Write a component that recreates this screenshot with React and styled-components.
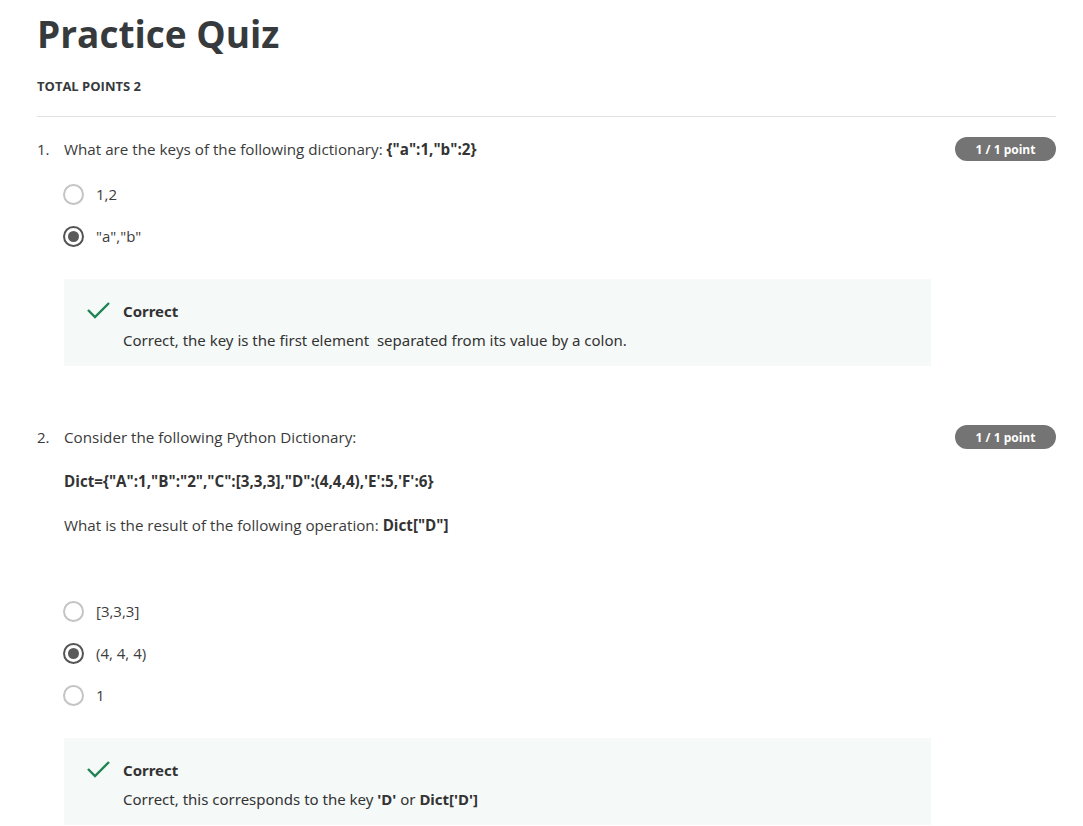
import React from 'react';
import styled, { createGlobalStyle } from 'styled-components';

const GlobalStyle = createGlobalStyle`
  body {
    margin: 0;
    background: #ffffff;
    font-family: 'Open Sans', 'Noto Sans', sans-serif;
    color: #373a3c;
  }
`;

const Page = styled.div`
  padding: 12px 27px 0 37px;
`;

const Title = styled.h1`
  margin: 0;
  font-size: 37px;
  line-height: 43px;
  font-weight: 700;
  color: #373a3c;
`;

const TotalPoints = styled.div`
  margin-top: 21px;
  font-size: 13px;
  line-height: 20px;
  font-weight: 700;
  text-transform: uppercase;
  color: #373a3c;
`;

const Divider = styled.hr`
  margin: 20px 0 0 0;
  border: none;
  border-top: 1px solid #e1e1e1;
`;

const QuestionBlock = styled.section`
  margin-top: ${(p) => p.$top}px;
`;

const QuestionRow = styled.div`
  display: flex;
  align-items: flex-start;
  justify-content: space-between;
`;

const QuestionBody = styled.div`
  display: flex;
  flex: 1;
`;

const Number = styled.span`
  width: 27px;
  flex-shrink: 0;
  font-size: 15px;
  line-height: 24px;
`;

const Prompt = styled.div`
  display: flex;
  flex-direction: column;
  gap: 20px;
  font-size: 15.2px;
  line-height: 24px;
  color: #3a3a3a;

  p {
    margin: 0;
  }
  b {
    font-weight: 700;
    color: #333;
  }
`;

const PointBadge = styled.span`
  width: 101px;
  height: 24px;
  border-radius: 12px;
  background: #747474;
  color: #ffffff;
  font-size: 12px;
  font-weight: 700;
  display: flex;
  align-items: center;
  justify-content: center;
  flex-shrink: 0;
`;

const Options = styled.div`
  margin: ${(p) => p.$top}px 0 0 26px;
  display: flex;
  flex-direction: column;
`;

const Option = styled.label`
  height: 42px;
  display: flex;
  align-items: center;
  gap: 12px;
  font-size: 15px;
  color: #3c3c3c;
`;

const Radio = styled.span`
  width: 21px;
  height: 21px;
  box-sizing: border-box;
  border-radius: 50%;
  border: 2px solid ${(p) => (p.$checked ? '#545454' : '#c4c4c4')};
  display: flex;
  align-items: center;
  justify-content: center;

  &::after {
    content: '';
    width: 11px;
    height: 11px;
    border-radius: 50%;
    background: ${(p) => (p.$checked ? '#5a5a5a' : 'transparent')};
  }
`;

const Feedback = styled.div`
  margin: 22px 125px 0 27px;
  background: #f5f9f8;
  padding: 20px 24px 14px 23px;
  display: flex;
  gap: 13px;
  font-family: 'Noto Sans', 'Open Sans', sans-serif;
`;

const CheckIcon = styled.svg`
  width: 23px;
  height: 24px;
  flex-shrink: 0;
`;

const FeedbackText = styled.div`
  font-size: 15px;
  line-height: 24px;
  color: #333333;

  b {
    font-weight: 700;
  }
`;

const FeedbackTitle = styled.div`
  font-weight: 700;
  font-size: 15px;
  margin-bottom: 5px;
`;

const Check = () => (
  <CheckIcon viewBox="0 0 23 24">
    <path d="M1 11 L8 18 L22 4" fill="none" stroke="#1f8354" strokeWidth="2.4" />
  </CheckIcon>
);

const App = () => (
  <>
    <GlobalStyle />
    <Page>
      <Title>Practice Quiz</Title>
      <TotalPoints>Total points 2</TotalPoints>
      <Divider />

      <QuestionBlock $top={20}>
        <QuestionRow>
          <QuestionBody>
            <Number>1.</Number>
            <Prompt>
              <p>
                What are the keys of the following dictionary: <b>{'{"a":1,"b":2}'}</b>
              </p>
            </Prompt>
          </QuestionBody>
          <PointBadge>1 / 1 point</PointBadge>
        </QuestionRow>
        <Options $top={12}>
          <Option>
            <Radio />
            1,2
          </Option>
          <Option>
            <Radio $checked />
            "a","b"
          </Option>
        </Options>
        <Feedback>
          <Check />
          <FeedbackText>
            <FeedbackTitle>Correct</FeedbackTitle>
            Correct, the key is the first element{'\u00a0'} separated from its value by a colon.
          </FeedbackText>
        </Feedback>
      </QuestionBlock>

      <QuestionBlock $top={59}>
        <QuestionRow>
          <QuestionBody>
            <Number>2.</Number>
            <Prompt>
              <p>Consider the following Python Dictionary:</p>
              <p>
                <b>{`Dict={"A":1,"B":"2","C":[3,3,3],"D":(4,4,4),'E':5,'F':6}`}</b>
              </p>
              <p>
                What is the result of the following operation: <b>Dict["D"]</b>
              </p>
            </Prompt>
          </QuestionBody>
          <PointBadge>1 / 1 point</PointBadge>
        </QuestionRow>
        <Options $top={53}>
          <Option>
            <Radio />
            [3,3,3]
          </Option>
          <Option>
            <Radio $checked />
            (4, 4, 4)
          </Option>
          <Option>
            <Radio />1
          </Option>
        </Options>
        <Feedback>
          <Check />
          <FeedbackText>
            <FeedbackTitle>Correct</FeedbackTitle>
            Correct, this corresponds to the key <b>'D'</b> or <b>Dict['D']</b>
          </FeedbackText>
        </Feedback>
      </QuestionBlock>
    </Page>
  </>
);

export default App;
